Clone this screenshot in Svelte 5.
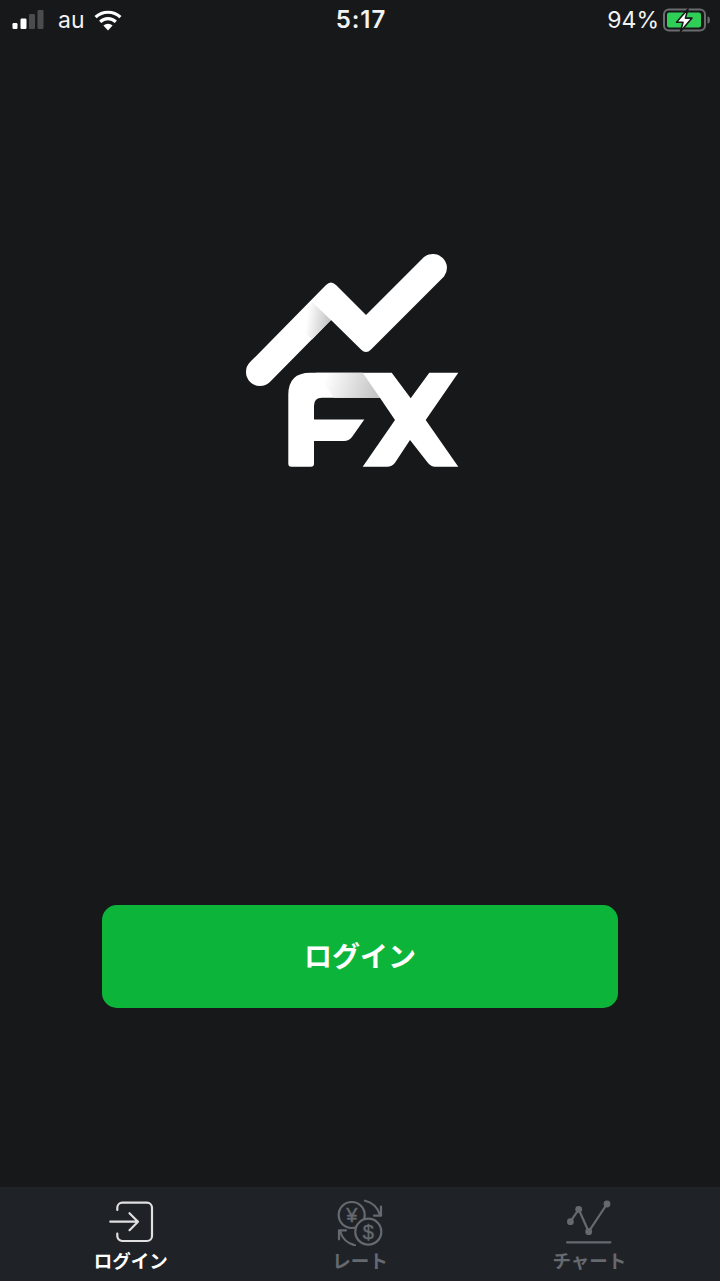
<script>
  const tabs = [
    { id: 'login', label: 'ログイン', active: true },
    { id: 'rate', label: 'レート', active: false },
    { id: 'chart', label: 'チャート', active: false }
  ];
</script>

<div class="screen">
  <header class="status">
    <div class="status-left">
      <svg class="signal" width="32" height="20" viewBox="0 0 32 20" aria-hidden="true">
        <rect x="0.5" y="13" width="5" height="6" rx="1.2" fill="#fff" />
        <rect x="8.5" y="8.5" width="6" height="10.5" rx="1.2" fill="#fff" />
        <rect x="17" y="4" width="6" height="15" rx="1.2" fill="#4a4c4e" />
        <rect x="25.5" y="0" width="6" height="19" rx="1.2" fill="#4a4c4e" />
      </svg>
      <span class="carrier">au</span>
      <svg class="wifi" width="28" height="21" viewBox="0 0 28 21" aria-hidden="true">
        <path d="M1.6 7.2A18 18 0 0 1 26.4 7.2" fill="none" stroke="#fff" stroke-width="3.2" />
        <path d="M6.2 11.8A11.4 11.4 0 0 1 21.8 11.8" fill="none" stroke="#fff" stroke-width="3.2" />
        <path d="M14 20.5L9.4 15.6A6.6 6.6 0 0 1 18.6 15.6Z" fill="#fff" />
      </svg>
    </div>
    <div class="time">5:17</div>
    <div class="status-right">
      <span class="pct">94%</span>
      <svg class="battery" width="47" height="24" viewBox="0 0 47 24" aria-hidden="true">
        <rect x="1" y="1.5" width="41" height="21" rx="5" fill="none" stroke="#6a6c6e" stroke-width="2" />
        <rect x="4" y="4.5" width="34" height="15" rx="2.2" fill="#2fcf57" />
        <path d="M44.5 8.5a2.4 3.5 0 0 1 0 7Z" fill="#6a6c6e" />
        <path d="M25 1L13.5 14.2h6.5L17.5 23.5l11.5-13.4h-6.6Z" fill="#fff" stroke="#16181a" stroke-width="1.6" stroke-linejoin="round" />
      </svg>
    </div>
  </header>

  <main class="main">
    <svg class="logo" width="240" height="240" viewBox="10 0 240 240" role="img" aria-label="FX">
      <defs>
        <linearGradient id="foldA" gradientUnits="userSpaceOnUse" x1="99" y1="79" x2="77" y2="76">
          <stop offset="0" stop-color="#c6c6c6" />
          <stop offset="1" stop-color="#fff" />
        </linearGradient>
        <linearGradient id="foldB" gradientUnits="userSpaceOnUse" x1="148" y1="150" x2="96" y2="134">
          <stop offset="0" stop-color="#c4c4c4" />
          <stop offset="1" stop-color="#fff" />
        </linearGradient>
      </defs>
      <path
        fill="#fff"
        d="M20.1 122.1L96 45Q101 40 106 45L136 75L194 17A14.1 14.1 0 0 1 214 36.6L141 109.6Q136 114.6 131 109.6L101 80L39.9 141.9A14 14 0 0 1 20.1 122.1Z"
      />
      <path fill="url(#foldA)" d="M82.4 62.2L101 80L82 99.5L63 81Z" />
      <path
        fill="#fff"
        d="M80.3 132.7H161.7L180.7 158.3L199.3 132.7H228.3L195.7 180L228.3 226.7H205Q201 226.7 198 223L180 200L165 222.7Q162 226.7 157 226.7H132.7L165 180L149.9 157.7H92Q84 157.7 84 165.7V179.5H134.3L122 197Q119 201 114 201H84V223.7Q84 226.7 81 226.7H61.3Q58.3 226.7 58.3 223.7V154.7Q58.3 132.7 80.3 132.7Z"
      />
      <path fill="url(#foldB)" d="M86 132.7H132.7L149.9 157.7H104Z" />
    </svg>
    <button class="login" type="button">ログイン</button>
  </main>

  <nav class="tabs">
    {#each tabs as tab}
      <div class="tab" class:active={tab.active}>
        <svg class="tab-icon" width="60" height="48" viewBox="0 0 60 48" aria-hidden="true">
          {#if tab.id === 'login'}
            <path d="M16.3 12V9.7a5 5 0 0 1 5-5H46a5 5 0 0 1 5 5V38a5 5 0 0 1-5 5H21.3a5 5 0 0 1-5-5v-2.5" />
            <path d="M9.3 23.7H37M28.5 15.2L37 23.7L28.5 32.2" />
          {:else if tab.id === 'rate'}
            <circle cx="21.7" cy="17" r="13" />
            <circle class="knock" cx="38.3" cy="33.7" r="13" />
            <text class="sym" x="21.7" y="23.5">¥</text>
            <text class="sym" x="38.3" y="40.5">$</text>
            <path d="M35 2.7A20 20 0 0 1 50 17M51 8.7V17.7H44" />
            <path d="M25 47.3A20 20 0 0 1 10 33M9 41.3V32.3H16" />
          {:else}
            <path d="M11.4 23.7L19.7 11.3L29.7 33.7L48 6" />
            <circle class="dot" cx="11.4" cy="23.7" r="3.4" />
            <circle class="dot" cx="19.7" cy="11.3" r="3.4" />
            <circle class="dot" cx="29.7" cy="33.7" r="3.4" />
            <circle class="dot" cx="48" cy="6" r="3.4" />
            <path d="M8 44.3H51.4" />
          {/if}
        </svg>
        <span class="tab-label">{tab.label}</span>
      </div>
    {/each}
  </nav>
</div>

<style>
  :global(body) {
    margin: 0;
    background: #16181a;
  }
  .screen {
    width: 720px;
    height: 1281px;
    display: flex;
    flex-direction: column;
    background: #16181a;
    color: #fff;
    overflow: hidden;
    font-family: "Noto Sans CJK JP", "Noto Sans", sans-serif;
  }
  .status {
    height: 40px;
    flex: none;
    display: grid;
    grid-template-columns: 1fr auto 1fr;
    align-items: center;
    padding: 0 10px 0 12px;
    font-family: Inter, "Noto Sans", sans-serif;
    font-size: 23px;
    color: #f2f2f2;
  }
  .status-left {
    display: flex;
    align-items: center;
  }
  .carrier {
    margin-left: 14px;
    font-weight: 400;
    line-height: 40px;
  }
  .wifi {
    margin-left: 9px;
  }
  .time {
    font-size: 24px;
    font-weight: 600;
    line-height: 40px;
    letter-spacing: 1px;
  }
  .status-right {
    display: flex;
    justify-content: flex-end;
    align-items: center;
  }
  .pct {
    font-weight: 400;
    line-height: 40px;
    margin-right: 4px;
  }
  .main {
    flex: 1;
    display: flex;
    flex-direction: column;
    align-items: center;
  }
  .logo {
    display: block;
    margin-top: 200px;
    flex: none;
  }
  .login {
    margin-top: 425px;
    width: 516px;
    height: 103px;
    flex: none;
    border: 0;
    border-radius: 15px;
    background: #0cb53a;
    color: #fff;
    font-family: "Noto Sans CJK JP", sans-serif;
    font-size: 28px;
    font-weight: 700;
    padding: 0 0 4px;
  }
  .tabs {
    height: 94px;
    flex: none;
    display: grid;
    grid-template-columns: repeat(3, 1fr);
    padding: 0 16px;
    background: #1f2328;
  }
  .tab {
    display: flex;
    flex-direction: column;
    align-items: center;
    padding-top: 11px;
    color: #666a70;
  }
  .tab.active {
    color: #e0e0e0;
  }
  .tab-icon {
    display: block;
    fill: none;
    stroke: currentColor;
    stroke-width: 2.2;
    stroke-linecap: round;
    stroke-linejoin: round;
  }
  .tab-icon .knock {
    fill: #1f2328;
  }
  .tab-icon .dot {
    fill: currentColor;
    stroke: none;
  }
  .tab-icon .sym {
    fill: currentColor;
    stroke: currentColor;
    stroke-width: 0.4;
    font-family: "Liberation Sans", sans-serif;
    font-size: 20px;
    font-weight: 400;
    text-anchor: middle;
  }
  .tab-label {
    font-size: 18.5px;
    line-height: 26px;
    font-weight: 700;
    margin-top: 1px;
  }
  .tab.active .tab-label {
    color: #fff;
  }
</style>
